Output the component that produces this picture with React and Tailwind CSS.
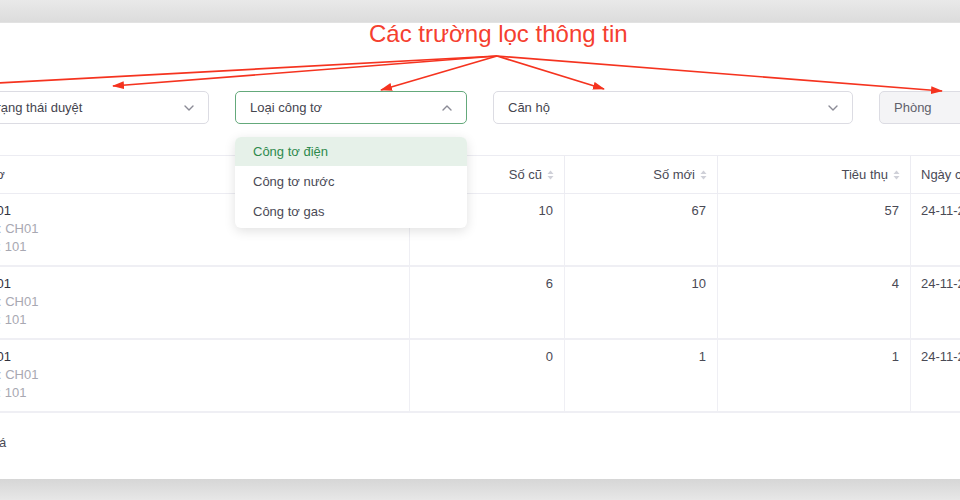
const rows = [
  { code: "ĐH-CT01", old: 10, now: 67, used: 57 },
  { code: "ĐH-CT01", old: 6, now: 10, used: 4 },
  { code: "ĐH-CT01", old: 0, now: 1, used: 1 },
];

const Chevron = ({ up }) => (
  <svg width="10" height="6" viewBox="0 0 10 6" className="text-[#8b8b96]">
    <path d={up ? "M1 5L5 1L9 5" : "M1 1L5 5L9 1"} fill="none" stroke="currentColor" strokeWidth="1.4" strokeLinecap="round" strokeLinejoin="round" />
  </svg>
);

const Sort = () => (
  <svg width="7" height="10" viewBox="0 0 7 10" className="ml-[5px] text-[#cfd0d8]">
    <path d="M3.5 0.5L6.5 4H0.5Z" fill="currentColor" />
    <path d="M3.5 9.5L6.5 6H0.5Z" fill="currentColor" />
  </svg>
);

const Select = ({ label, w, active, disabled }) => (
  <div
    className={`flex h-[33px] shrink-0 items-center justify-between rounded-[5px] border px-[14px] text-[13px] ${w} ${
      active ? "border-[#64a97b]" : "border-[#dcdce3]"
    } ${disabled ? "bg-[#f4f4f6] text-[#60606b]" : "bg-white text-[#45454f]"}`}
  >
    <span>{label}</span>
    {!disabled && <Chevron up={active} />}
  </div>
);

const Arrows = () => (
  <svg width="960" height="500" className="pointer-events-none absolute left-0 top-0">
    <defs>
      <marker id="head" viewBox="0 0 12 8" refX="11" refY="4" markerWidth="12" markerHeight="8" markerUnits="userSpaceOnUse" orient="auto">
        <path d="M0 0L12 4L0 8Z" fill="#f5331f" />
      </marker>
    </defs>
    <g stroke="#f5331f" strokeWidth="1.7" fill="none">
      <line x1="497" y1="56" x2="-20" y2="84" />
      <line x1="497" y1="56" x2="113" y2="86" markerEnd="url(#head)" />
      <line x1="497" y1="56" x2="381" y2="90" markerEnd="url(#head)" />
      <line x1="497" y1="56" x2="604" y2="89" markerEnd="url(#head)" />
      <line x1="497" y1="56" x2="942" y2="91" markerEnd="url(#head)" />
    </g>
  </svg>
);

export default function App() {
  return (
    <div className="relative h-[500px] w-[960px] overflow-hidden bg-[#e2e2e2] font-['Liberation_Sans',Arial,sans-serif]">
      <div className="h-[22px] bg-gradient-to-b from-[#e9e9e9] to-[#dcdcdc]" />
      <div className="h-[456px] bg-white">
        <div className="mt-[1px] pl-[369px] text-[24px] leading-[22px] text-[#f5402f]">Các trường lọc thông tin</div>

        <div className="-ml-[26px] mt-[46px] flex gap-[26px]">
          <Select label="Trạng thái duyệt" w="w-[235px]" />
          <div className="relative">
            <Select label="Loại công tơ" w="w-[232px]" active />
            <div className="absolute left-0 top-[46px] z-10 w-[232px] overflow-hidden rounded-[6px] bg-white pb-[2px] text-[13px] shadow-[0_3px_12px_rgba(0,0,0,0.12)]">
              <div className="flex h-[29px] items-center bg-[#e6f1e9] px-[18px] text-[#2e8a4d]">Công tơ điện</div>
              <div className="flex h-[31px] items-center px-[18px] text-[#4a4a55]">Công tơ nước</div>
              <div className="flex h-[29px] items-center px-[18px] text-[#4a4a55]">Công tơ gas</div>
            </div>
          </div>
          <Select label="Căn hộ" w="w-[360px]" />
          <Select label="Phòng" w="w-[120px]" disabled />
        </div>

        <div className="-ml-[58px] mt-[31px] grid w-[1126px] grid-cols-[468px_155px_153px_193px_157px] text-[13px] text-[#4a4a55]">
          <div className="flex h-[39px] items-center border-y border-r border-[#ececf2] pl-[16px] pr-[12px]">Công tơ</div>
          <div className="flex h-[39px] items-center justify-end border-y border-r border-[#ececf2] px-[10px]">Số cũ<Sort /></div>
          <div className="flex h-[39px] items-center justify-end border-y border-r border-[#ececf2] px-[10px]">Số mới<Sort /></div>
          <div className="flex h-[39px] items-center justify-end border-y border-r border-[#ececf2] px-[10px]">Tiêu thụ<Sort /></div>
          <div className="flex h-[39px] items-center border-y border-[#ececf2] px-[10px]">Ngày chốt</div>

          {rows.map((r, i) => (
            <div key={i} className="contents">
              <div className="h-[73px] border-b-2 border-r border-[#efeff4] px-[12px] pt-[8px] leading-[18px]">
                <div className="pl-[2px] text-[#33333d]">{r.code}</div>
                <div className="pl-[2px] text-[#a8a8b2]">Căn hộ: CH01</div>
                <div className="pl-[6px] text-[#a8a8b2]">Phòng: 101</div>
              </div>
              <div className="h-[73px] border-b-2 border-r border-[#efeff4] px-[11px] pt-[8px] text-right leading-[18px]">{r.old}</div>
              <div className="h-[73px] border-b-2 border-r border-[#efeff4] px-[11px] pt-[8px] text-right leading-[18px]">{r.now}</div>
              <div className="h-[73px] border-b-2 border-r border-[#efeff4] px-[11px] pt-[8px] text-right leading-[18px]">{r.used}</div>
              <div className="h-[73px] border-b-2 border-[#efeff4] px-[10px] pt-[8px] leading-[18px]">24-11-2024</div>
            </div>
          ))}
        </div>

        <div className="-ml-[17px] mt-[21px] text-[13px] leading-[18px] text-[#4a4a55]">Xoá</div>
      </div>
      <div className="h-[22px] bg-gradient-to-b from-[#d6d6d6] to-[#e8e8e8]" />
      <Arrows />
    </div>
  );
}
